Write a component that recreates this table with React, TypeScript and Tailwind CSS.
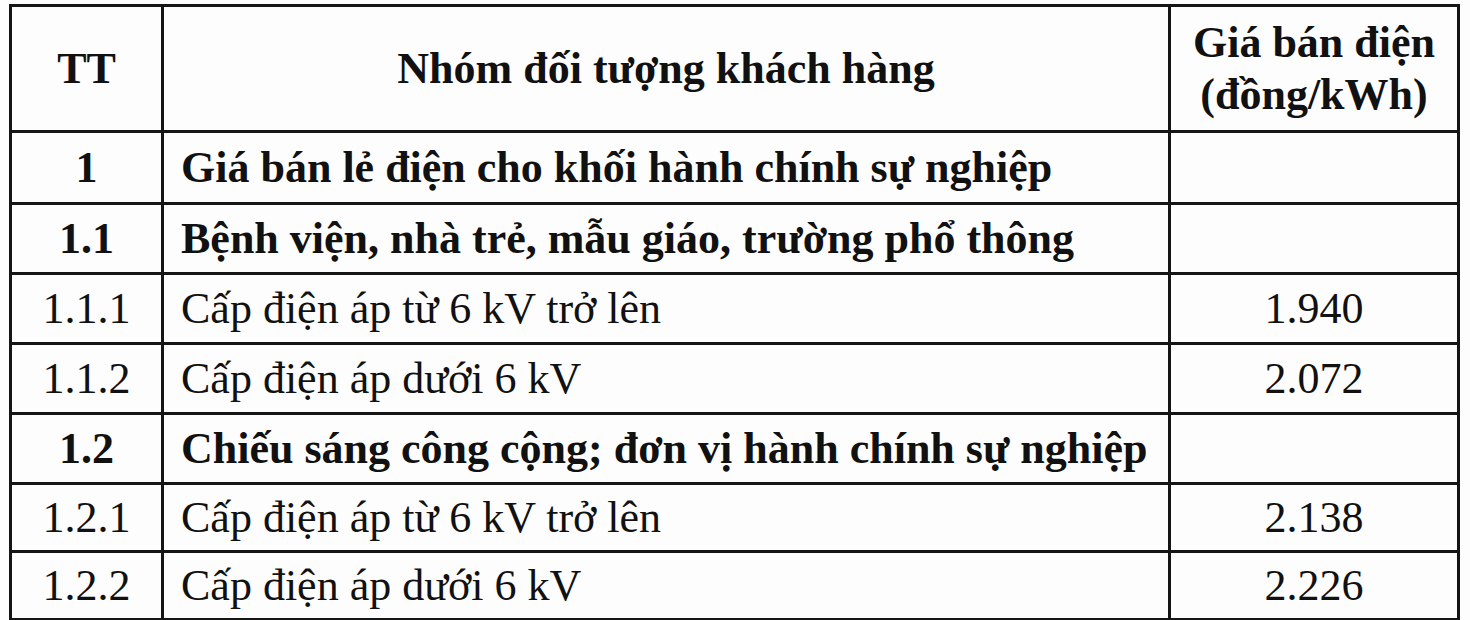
const rows = [
  { tt: '1', name: 'Giá bán lẻ điện cho khối hành chính sự nghiệp', price: '', bold: true, h: 'h-[72px]' },
  { tt: '1.1', name: 'Bệnh viện, nhà trẻ, mẫu giáo, trường phổ thông', price: '', bold: true, h: 'h-[70px]' },
  { tt: '1.1.1', name: 'Cấp điện áp từ 6 kV trở lên', price: '1.940', bold: false, h: 'h-[70px]' },
  { tt: '1.1.2', name: 'Cấp điện áp dưới 6 kV', price: '2.072', bold: false, h: 'h-[70px]' },
  { tt: '1.2', name: 'Chiếu sáng công cộng; đơn vị hành chính sự nghiệp', price: '', bold: true, h: 'h-[70px]' },
  { tt: '1.2.1', name: 'Cấp điện áp từ 6 kV trở lên', price: '2.138', bold: false, h: 'h-[68px]' },
  { tt: '1.2.2', name: 'Cấp điện áp dưới 6 kV', price: '2.226', bold: false, h: 'h-[68px]' },
];

export default function App() {
  return (
    <div className="w-[1470px] h-[620px] overflow-hidden bg-[#fdfdfd] pt-[4px] pl-[9px] font-['Liberation_Serif','Times_New_Roman',serif] text-[#111]">
      <table className="border-collapse table-fixed w-[1448px] text-[44px] leading-[1.18]">
        <colgroup>
          <col className="w-[152px]" />
          <col className="w-[1007px]" />
          <col className="w-[289px]" />
        </colgroup>
        <thead>
          <tr className="h-[126px]">
            <th className="border-[3px] border-[#151515] text-center font-bold">TT</th>
            <th className="border-[3px] border-[#151515] text-center font-bold">Nhóm đối tượng khách hàng</th>
            <th className="border-[3px] border-[#151515] text-center font-bold">
              Giá bán điện
              <br />
              (đồng/kWh)
            </th>
          </tr>
        </thead>
        <tbody>
          {rows.map((r) => (
            <tr key={r.tt} className={r.h}>
              <td className={`border-[3px] border-[#151515] text-center ${r.bold ? 'font-bold' : 'font-normal'}`}>
                {r.tt}
              </td>
              <td className={`border-[3px] border-[#151515] pl-[17px] text-left ${r.bold ? 'font-bold' : 'font-normal'}`}>
                {r.name}
              </td>
              <td className="border-[3px] border-[#151515] text-center">{r.price}</td>
            </tr>
          ))}
        </tbody>
      </table>
    </div>
  );
}
